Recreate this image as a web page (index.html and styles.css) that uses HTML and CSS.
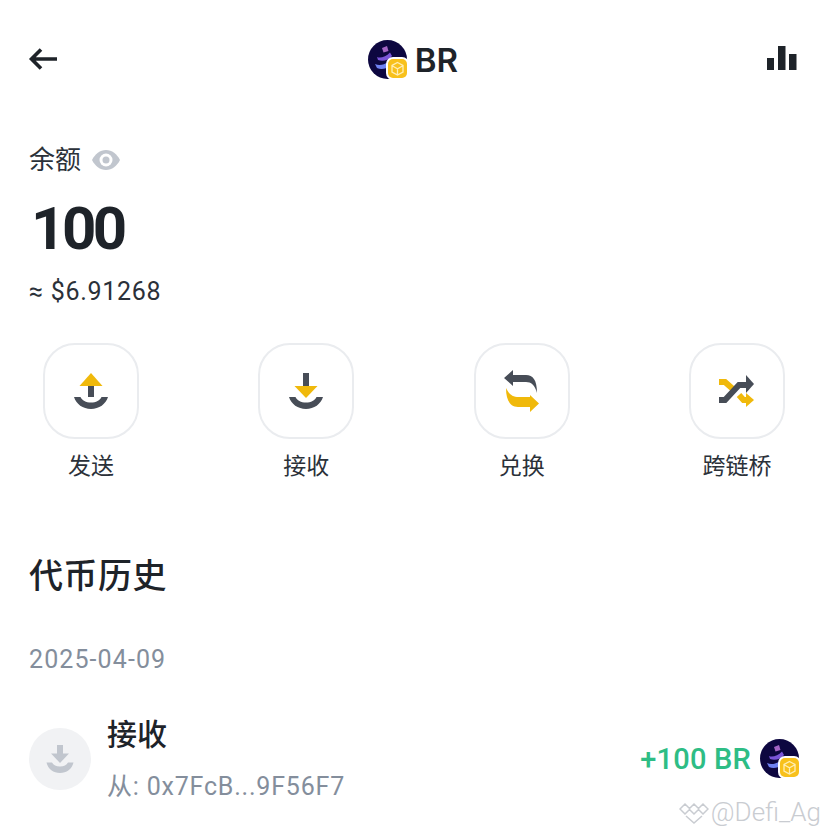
FILE: index.html
```html
<!DOCTYPE html>
<html lang="en">
<head>
  <meta charset="UTF-8">
  <meta name="viewport" content="width=device-width, initial-scale=1.0">
  <title>BR</title>
  <link rel="stylesheet" href="styles.css">
</head>
<body>
  <svg class="defs" width="0" height="0">
    <symbol id="token" viewBox="0 0 41 40">
      <circle cx="19.500" cy="19.500" r="19.500" fill="#0d0740"/>
      <path d="M14 8l5-2 1.500 5-5 1.500z" fill="#a364c4"/>
      <path d="M9 17c3 1.500 9 0 13-4.500l2 3.500c-3 4-9 6-14 4z" fill="#7a55d8"/>
      <path d="M7 24c4 2 9 1 13-2l2 4c-4 3-9 4-13 2z" fill="#6f82f2"/>
      <rect x="18" y="17" width="23" height="23" rx="7" fill="#fff"/>
      <rect x="20" y="19" width="19" height="19" rx="5" fill="#f8c11c"/>
      <path d="M29.500 22.500l5.500 3v6.500l-5.500 3-5.500-3v-6.500zM24.500 26l5 2.800 5-2.800M29.500 28.800v5.700" fill="none" stroke="#ffeeb5" stroke-width="1.300"/>
    </symbol>
  </svg>

  <header class="topbar">
    <svg width="30" height="26" viewBox="0 0 30 26">
      <path d="M29 12H4M13 2.500L3.500 12 13 21.500" fill="none" stroke="#1e2329" stroke-width="3.600"/>
    </svg>
    <div class="title">
      <svg width="41" height="40"><use href="#token"/></svg>
      <span>BR</span>
    </div>
    <svg width="30" height="28" viewBox="0 0 30 28">
      <rect x="0" y="12" width="7" height="12" fill="#1e2329"/>
      <rect x="11" y="0" width="7.500" height="24" fill="#1e2329"/>
      <rect x="22" y="8" width="7.500" height="16" fill="#1e2329"/>
    </svg>
  </header>

  <section class="balance">
    <div class="balance-label">
      <span>余额</span>
      <svg width="28" height="20" viewBox="0 0 28 20">
        <path d="M14 0C8 0 3 4 0 10c3 6 8 10 14 10s11-4 14-10C25 4 20 0 14 0z" fill="#c1c6ce"/>
        <circle cx="14" cy="10" r="6.500" fill="#fff"/>
        <circle cx="14" cy="10" r="3.500" fill="#c1c6ce"/>
      </svg>
    </div>
    <div class="balance-amount">100</div>
    <div class="balance-usd">≈ $6.91268</div>
  </section>

  <nav class="actions">
    <div class="action">
      <div class="action-btn">
        <svg width="36" height="36" viewBox="0 0 36 36">
          <rect x="15" y="12" width="6" height="12" fill="#474d57"/>
          <path d="M18 0l11.500 13h-23z" fill="#f0b90b"/>
          <path class="arc" d="M1 24h6.500c1.500 3.500 5.500 5.500 10.500 5.500s9-2 10.500-5.500H35c-2 7-9 12-17 12S3 31 1 24z"/>
        </svg>
      </div>
      <span>发送</span>
    </div>
    <div class="action">
      <div class="action-btn">
        <svg width="36" height="36" viewBox="0 0 36 36">
          <rect x="15" y="0" width="6" height="14" fill="#474d57"/>
          <path d="M6.500 13h23L18 25z" fill="#f0b90b"/>
          <path class="arc" d="M1 24h6.500c1.500 3.500 5.500 5.500 10.500 5.500s9-2 10.500-5.500H35c-2 7-9 12-17 12S3 31 1 24z"/>
        </svg>
      </div>
      <span>接收</span>
    </div>
    <div class="action">
      <div class="action-btn">
        <svg width="36" height="42" viewBox="0 0 36 42">
          <path d="M0 8L9 0v5h13c7 0 11 5 11 18-2-8-6-11-11-11H9v4z" fill="#474d57"/>
          <path d="M2 18c3 6 6 9 13 9h11v-2l9 8.500L26 42v-5H14C6 37 2 30 2 18z" fill="#f0b90b"/>
        </svg>
      </div>
      <span>兑换</span>
    </div>
    <div class="action">
      <div class="action-btn">
        <svg width="36" height="33" viewBox="0 0 36 33">
          <path d="M0 7h6l9 8M20 20l4.500 5H28" fill="none" stroke="#f0b90b" stroke-width="6"/>
          <path d="M27 18l8 7-8 7z" fill="#f0b90b"/>
          <path d="M0 25h6L20 10h8" fill="none" stroke="#474d57" stroke-width="6"/>
          <path d="M27 0l8 9-8 9z" fill="#474d57"/>
        </svg>
      </div>
      <span>跨链桥</span>
    </div>
  </nav>

  <h2 class="history-title">代币历史</h2>
  <div class="history-date">2025-04-09</div>

  <div class="tx">
    <div class="tx-icon">
      <svg width="28" height="28" viewBox="0 0 28 28">
        <rect x="11" y="0" width="6" height="10" fill="#c1c6ce"/>
        <path d="M5 8.500h18L14 18z" fill="#c1c6ce"/>
        <path d="M0.500 17.500h5.500c1.500 2.500 4 4 8 4s6.500-1.500 8-4h5.500C26 24 20.500 28 14 28S2 24 0.500 17.500z" fill="#c1c6ce"/>
      </svg>
    </div>
    <div class="tx-info">
      <div class="tx-type">接收</div>
      <div class="tx-from">从: 0x7FcB...9F56F7</div>
    </div>
    <div class="tx-amount">
      <span>+100 BR</span>
      <svg width="41" height="40"><use href="#token"/></svg>
    </div>
  </div>

  <div class="watermark">
    <svg width="30" height="23" viewBox="0 0 30 23">
      <path d="M1 8l5-5 4.500 4.500L15 3l4.500 4.500L24 3l5 5-5 5-4.500-4.500L15 13l-4.500-4.500L6 13zM7 15l8 7 8-7" fill="none" stroke="#c9ccd1" stroke-width="1.500"/>
    </svg>
    <span>@Defi_Ag</span>
  </div>
</body>
</html>
```

FILE: styles.css
```css
* {
  box-sizing: border-box;
}
body {
  margin: 0;
  height: 831px;
  overflow: hidden;
  position: relative;
  background: #fff;
  color: #1e2329;
  font-family: Roboto, "Noto Sans CJK SC", sans-serif;
}
.defs {
  position: absolute;
}
svg {
  display: block;
  flex: none;
}
.topbar {
  display: flex;
  align-items: center;
  justify-content: space-between;
  padding: 40px 31px 0 28px;
  height: 80px;
}
.title {
  display: flex;
  align-items: center;
  gap: 6px;
  font-family: Inter, sans-serif;
  font-size: 33px;
  font-weight: 600;
  margin-left: 1px;
}
.balance {
  padding: 62px 0 0 29px;
}
.balance-label {
  display: flex;
  align-items: center;
  gap: 11px;
  font-size: 26px;
  line-height: 36px;
  color: #2b3139;
}
.balance-amount {
  font-size: 60px;
  font-weight: 700;
  line-height: 70px;
  letter-spacing: -3.5px;
  margin-top: 16px;
  padding-left: 2px;
}
.balance-usd {
  font-size: 25px;
  line-height: 34px;
  letter-spacing: 0.7px;
  margin-top: 11px;
  color: #2b3139;
}
.actions {
  display: flex;
  justify-content: space-between;
  padding: 34px 43px 0;
}
.action {
  display: flex;
  flex-direction: column;
  align-items: center;
  width: 96px;
  font-size: 23px;
  line-height: 32px;
  color: #2b3139;
  white-space: nowrap;
}
.action-btn {
  width: 96px;
  height: 96px;
  border: 2px solid #eaecef;
  border-radius: 32px;
  display: flex;
  align-items: center;
  justify-content: center;
  margin-bottom: 12px;
}
.arc {
  fill: #474d57;
}
.history-title {
  margin: 0;
  padding: 69px 0 0 29px;
  font-size: 34px;
  font-weight: 500;
  line-height: 48px;
  letter-spacing: 0.5px;
}
.history-date {
  padding: 43px 0 0 29px;
  font-size: 25px;
  line-height: 34px;
  letter-spacing: 1.1px;
  color: #848e9c;
}
.tx {
  display: flex;
  align-items: center;
  padding: 37px 27px 0 29px;
}
.tx-icon {
  width: 62px;
  height: 62px;
  border-radius: 50%;
  background: #f1f2f4;
  display: flex;
  align-items: center;
  justify-content: center;
  margin-right: 16px;
}
.tx-info {
  flex: 1;
}
.tx-type {
  font-size: 30px;
  font-weight: 500;
  line-height: 42px;
}
.tx-from {
  font-size: 25px;
  line-height: 34px;
  letter-spacing: 0.8px;
  margin-top: 14px;
  color: #848e9c;
}
.tx-amount {
  display: flex;
  align-items: center;
  gap: 9px;
  font-size: 29px;
  font-weight: 500;
  letter-spacing: 0.2px;
  color: #2ebd85;
}
.watermark {
  position: absolute;
  right: 7px;
  bottom: 4px;
  display: flex;
  align-items: center;
  gap: 2px;
  font-size: 26px;
  font-weight: 300;
  color: #c9ccd1;
}
```
